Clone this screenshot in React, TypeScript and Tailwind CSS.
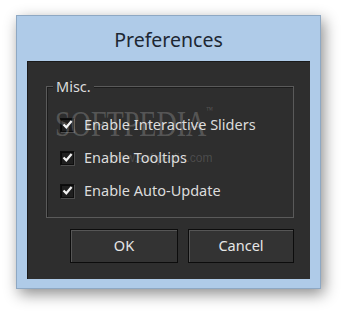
function CheckRow({ label }: { label: string }) {
  return (
    <label className="flex items-center gap-[10px] h-[33px]">
      <span className="w-[14px] h-[14px] bg-[#1f1f1f] border border-[#0e0e0e] shadow-[inset_1px_1px_0_#0a0a0a,1px_1px_0_#4d4d4d] flex items-center justify-center">
        <svg width="11" height="11" viewBox="0 0 11 11">
          <path d="M1.5 5.5 L4.3 8.3 L9.6 2" fill="none" stroke="#f2f2f2" strokeWidth="2.2" />
        </svg>
      </span>
      <span className="text-[14.5px] text-[#dcdcdc] leading-none">{label}</span>
    </label>
  );
}

function DlgButton({ title, w }: { title: string; w: string }) {
  return (
    <button
      className={`${w} h-[34px] bg-[#333] border border-[#0c0c0c] shadow-[inset_1px_1px_0_#565656] text-[14.5px] text-[#e6e6e6]`}
    >
      {title}
    </button>
  );
}

export default function App() {
  return (
    <div className="w-[350px] h-[318px] bg-white pt-[15px] pl-[16px] font-['Noto_Sans',sans-serif]">
      <div className="relative w-[305px] h-[274px] bg-[#afcbe8] border border-[#8ea8c3] shadow-[3px_5px_14px_rgba(0,0,0,0.45)] flex flex-col">
        <div className="h-[45px] flex items-center justify-center pt-[3px] text-[19.5px] text-[#1d2733]">
          Preferences
        </div>
        <div className="mx-[10px] h-[218px] bg-[#2e2e2e] border-t border-l border-[#1a1a1a] pl-[18px] pr-[16px] pt-[24px]">
          <fieldset className="relative h-[132px] border border-[#5a5a5a] shadow-[inset_1px_1px_0_#1c1c1c] pl-[13px] pt-[21px]">
            <span className="absolute -top-[10px] left-[6px] px-[3px] bg-[#2e2e2e] text-[14.5px] leading-[18px] text-[#dcdcdc]">
              Misc.
            </span>
            <CheckRow label="Enable Interactive Sliders" />
            <CheckRow label="Enable Tooltips" />
            <CheckRow label="Enable Auto-Update" />
          </fieldset>
          <div className="flex gap-[10px] mt-[11px] pl-[24px]">
            <DlgButton title="OK" w="w-[108px]" />
            <DlgButton title="Cancel" w="w-[106px]" />
          </div>
        </div>
        <div className="pointer-events-none absolute left-[38px] top-[90px] origin-left scale-x-[0.78] font-['Liberation_Serif',serif] text-[36px] leading-none text-white/20">
          SOFTPEDIA<span className="text-[9px] align-top">™</span>
        </div>
        <div className="pointer-events-none absolute left-[92px] top-[133px] font-['Liberation_Sans',sans-serif] text-[12px] text-white/15">
          www.softpedia.com
        </div>
      </div>
    </div>
  );
}
